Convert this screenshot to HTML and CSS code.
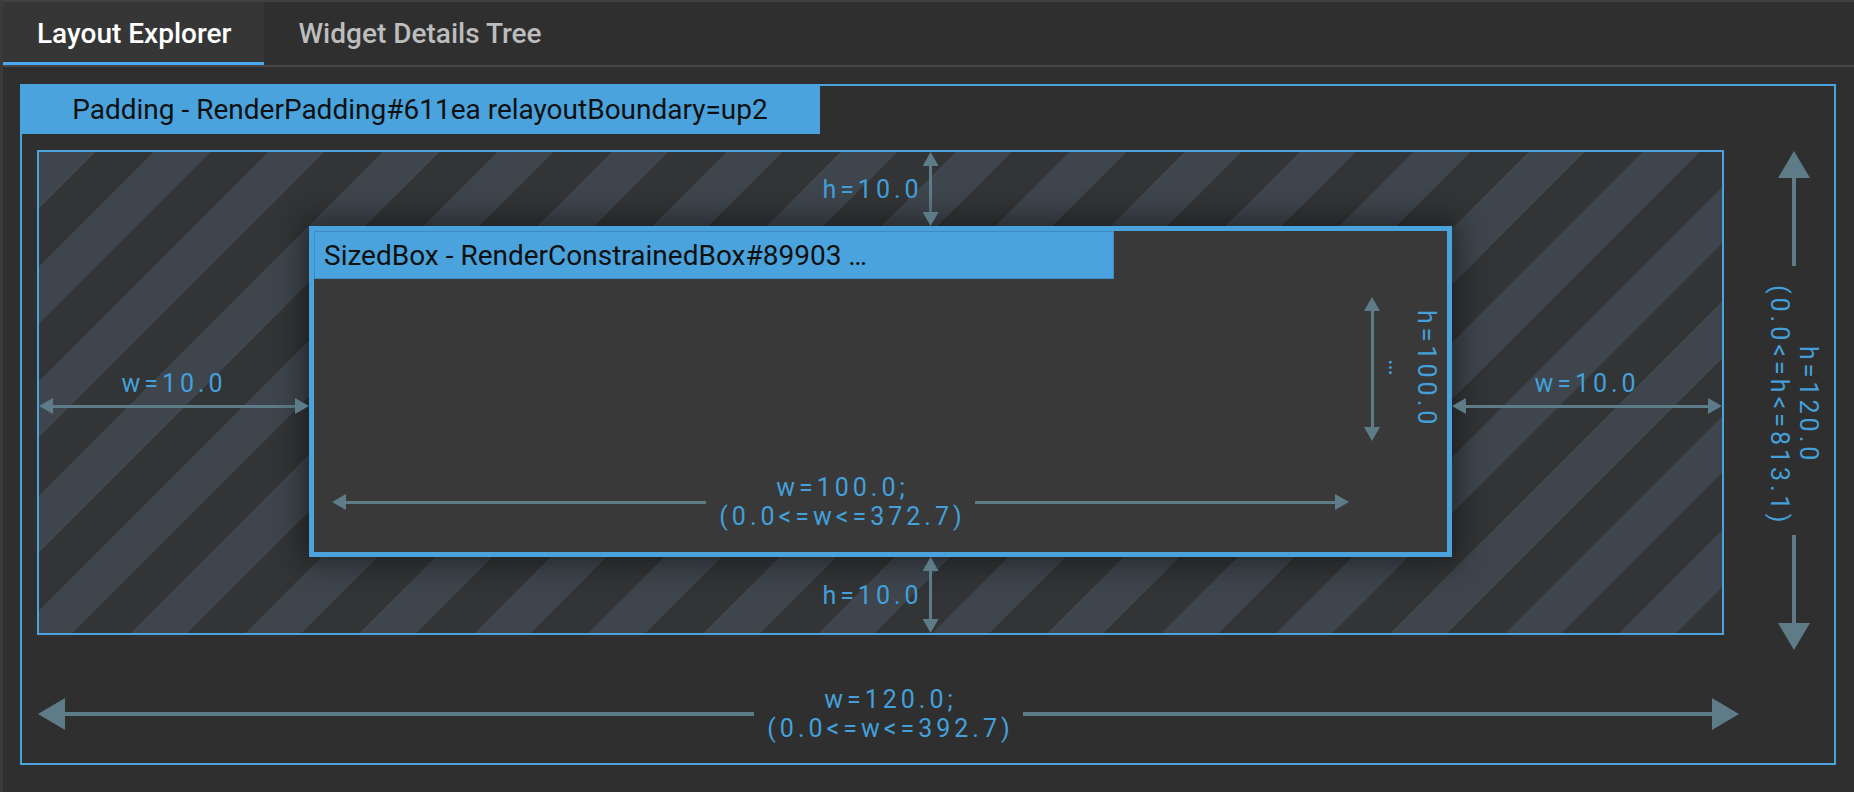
FILE: index.html
```html
<!DOCTYPE html>
<html>
<head>
<meta charset="utf-8">
<link rel="stylesheet" href="styles.css">
</head>
<body>
<div class="panel">
  <div class="tabs">
    <div class="tab active">Layout Explorer</div>
    <div class="tab">Widget Details Tree</div>
  </div>
  <div class="explorer">
    <div class="outer">
      <div class="title title-center">Padding - RenderPadding#611ea relayoutBoundary=up2</div>
      <div class="outer-grid">
        <div class="padding-box">
          <div class="pad-top">
            <div class="label">h=10.0</div>
            <div class="varrow"><div class="head up"></div><div class="line"></div><div class="head down"></div></div>
          </div>
          <div class="pad-side pad-left">
            <div class="label">w=10.0</div>
            <div class="harrow"><div class="head left"></div><div class="line"></div><div class="head right"></div></div>
          </div>
          <div class="sized">
            <div class="title title-left">SizedBox - RenderConstrainedBox#89903 …</div>
            <div class="sized-body">
              <div class="vdim-inner">
                <div class="varrow"><div class="head up"></div><div class="line"></div><div class="head down"></div></div>
                <div class="label vertical">h=100.0<br>…</div>
              </div>
              <div class="harrow labeled inner-w">
                <div class="head left"></div><div class="line"></div>
                <div class="label two">w=100.0;<br>(0.0&lt;=w&lt;=372.7)</div>
                <div class="line"></div><div class="head right"></div>
              </div>
            </div>
          </div>
          <div class="pad-side pad-right">
            <div class="label">w=10.0</div>
            <div class="harrow"><div class="head left"></div><div class="line"></div><div class="head right"></div></div>
          </div>
          <div class="pad-bottom">
            <div class="label">h=10.0</div>
            <div class="varrow"><div class="head up"></div><div class="line"></div><div class="head down"></div></div>
          </div>
        </div>
        <div class="varrow big outer-h">
          <div class="head up"></div><div class="line"></div>
          <div class="label vertical two">h=120.0<br>(0.0&lt;=h&lt;=813.1)</div>
          <div class="line"></div><div class="head down"></div>
        </div>
        <div class="harrow big labeled outer-w">
          <div class="head left"></div><div class="line"></div>
          <div class="label two">w=120.0;<br>(0.0&lt;=w&lt;=392.7)</div>
          <div class="line"></div><div class="head right"></div>
        </div>
      </div>
    </div>
  </div>
</div>
</body>
</html>
```

FILE: styles.css
```css
* {
  box-sizing: border-box;
  margin: 0;
  padding: 0;
}

html, body {
  width: 1854px;
  height: 792px;
  overflow: hidden;
  background: #2f2f2f;
}

body {
  font-family: Roboto, "Liberation Sans", sans-serif;
}

.panel {
  height: 792px;
  border-left: 3px solid #3a3a3a;
  border-top: 2px solid #404040;
  display: flex;
  flex-direction: column;
}

/* Tabs */
.tabs {
  display: flex;
  height: 65px;
  border-bottom: 2px solid #464646;
  flex: none;
}

.tab {
  height: 63px;
  padding: 0 33px 0 34px;
  display: flex;
  align-items: center;
  font-size: 28px;
  font-weight: 500;
  color: #bdbdbd;
}

.tab.active {
  background: #363636;
  color: #ffffff;
  border-bottom: 3px solid #4aa8ee;
  padding-top: 3px;
}

/* Explorer area */
.explorer {
  padding: 17px 0 0 17px;
}

.outer {
  width: 1816px;
  height: 681px;
  border: 2px solid #4aa3dc;
  display: flex;
  flex-direction: column;
}

.title {
  width: 800px;
  flex: none;
  background: #4aa3dc;
  color: #101010;
  font-size: 28px;
  display: flex;
  align-items: center;
  white-space: nowrap;
  overflow: hidden;
}

.title-center {
  height: 50px;
  margin: -2px 0 0 -2px;
  justify-content: center;
}

.title-left {
  height: 48px;
  border: 1px solid #3a8cc2;
  padding-left: 9px;
  justify-content: flex-start;
}

.outer-grid {
  margin: 16px 0 0 15px;
  display: grid;
  grid-template-columns: 1687px 1fr;
  grid-template-rows: 485px 1fr;
  flex: 1;
}

/* Padding (striped) region */
.padding-box {
  grid-column: 1;
  grid-row: 1;
  border: 2px solid #4aa3dc;
  background: repeating-linear-gradient(135deg, #3e454c 0 40px, #323436 40px 81px);
  display: grid;
  grid-template-columns: 270px 1143px 270px;
  grid-template-rows: 74px 331px 1fr;
}

.pad-top, .pad-bottom {
  grid-column: 2;
  display: flex;
  justify-content: center;
  align-items: stretch;
}

.pad-top { grid-row: 1; }
.pad-bottom { grid-row: 3; }

.pad-top .label, .pad-bottom .label {
  align-self: center;
}

.pad-side {
  grid-row: 2;
  display: flex;
  flex-direction: column;
  justify-content: center;
}

.pad-side .label {
  align-self: center;
}

.pad-left { grid-column: 1; }
.pad-right { grid-column: 3; }

/* Labels */
.label {
  font-size: 25px;
  line-height: 29px;
  letter-spacing: 4px;
  color: #43a0da;
  white-space: nowrap;
  text-align: center;
}

.label.two {
  padding: 0 9px 0 13px;
}

.label.vertical {
  writing-mode: vertical-rl;
}

.label.vertical.two {
  padding: 19px 0 9px 0;
}

/* Arrows */
.harrow {
  display: flex;
  align-items: center;
  height: 16px;
}

.harrow .line {
  flex: 1;
  height: 3px;
  background: #5e7b88;
}

.harrow .head {
  width: 14px;
  height: 16px;
  background: #5e7b88;
  flex: none;
}

.head.left { clip-path: polygon(0 50%, 100% 0, 100% 100%); }
.head.right { clip-path: polygon(0 0, 100% 50%, 0 100%); }
.head.up { clip-path: polygon(50% 0, 100% 100%, 0 100%); }
.head.down { clip-path: polygon(0 0, 100% 0, 50% 100%); }

.varrow {
  display: flex;
  flex-direction: column;
  align-items: center;
  width: 16px;
  flex: none;
}

.varrow .line {
  flex: 1;
  width: 3px;
  background: #5e7b88;
}

.varrow .head {
  width: 16px;
  height: 14px;
  background: #5e7b88;
  flex: none;
}

/* Big outer arrows */
.varrow.big {
  width: 32px;
}

.varrow.big .head {
  width: 32px;
  height: 27px;
}

.varrow.big .line {
  width: 4px;
}

.harrow.big .head {
  width: 27px;
  height: 32px;
}

.harrow.big .line {
  height: 4px;
}

.harrow.labeled {
  height: 58px;
}

.outer-h {
  grid-column: 2;
  grid-row: 1;
  align-self: start;
  height: 499px;
  margin: 1px 0 0 54px;
}

.outer-w {
  grid-column: 1;
  grid-row: 2;
  align-self: start;
  width: 1701px;
  margin: 50px 0 0 1px;
}

/* SizedBox */
.sized {
  grid-column: 2;
  grid-row: 2;
  border: 5px solid #4aa3dc;
  background: #393939;
  box-shadow: 0 0 28px 6px rgba(0, 0, 0, 0.45);
  display: flex;
  flex-direction: column;
}

.sized-body {
  flex: 1;
  display: grid;
  grid-template-columns: 1fr auto;
  grid-template-rows: 144px auto;
  row-gap: 32px;
  padding: 18px 6px 0 18px;
}

.vdim-inner {
  grid-column: 2;
  grid-row: 1;
  display: flex;
  align-items: stretch;
  gap: 3px;
}

.vdim-inner .label {
  align-self: center;
}

.inner-w {
  grid-column: 1;
  grid-row: 2;
  width: 1017px;
}
```
